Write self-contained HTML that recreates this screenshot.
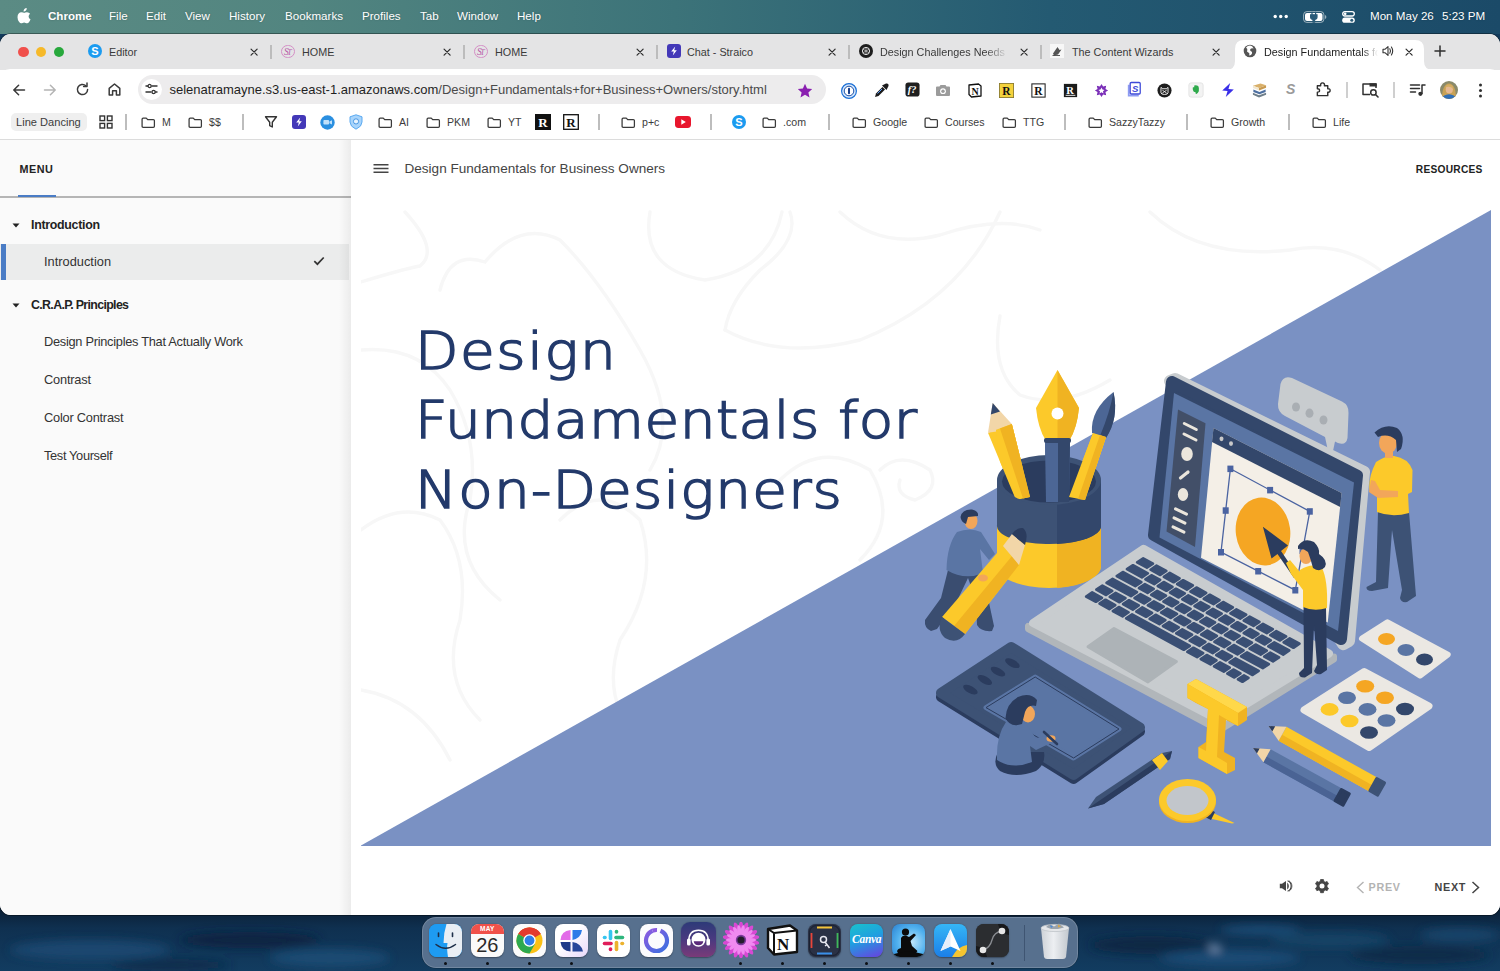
<!DOCTYPE html>
<html lang="en">
<head>
<meta charset="utf-8">
<title>Design Fundamentals for Business Owners</title>
<style>
*{box-sizing:border-box;margin:0;padding:0}
html,body{width:1500px;height:971px;overflow:hidden}
body{position:relative;font-family:"Liberation Sans",sans-serif;background:#0f3252;color:#222}
.abs{position:absolute}
/* desktop */
#desk{position:absolute;left:0;top:0;width:1500px;height:971px;background:#123a5c}
#menubar{position:absolute;left:0;top:0;width:1500px;height:34px;background:linear-gradient(90deg,#5b8b84 0%,#528580 20%,#3c7379 45%,#245a72 70%,#1b4a68 100%);color:#fff;font-size:11.6px}
#menubar span{position:absolute;top:8px;line-height:15px;white-space:nowrap;text-shadow:0 0 2px rgba(0,0,0,.25)}
/* window */
#win{position:absolute;left:0;top:34px;width:1500px;height:881px;background:#fff;border-radius:11px 11px 11px 11px;overflow:hidden;box-shadow:0 0 0 1px rgba(0,0,0,.35)}
#tabs{position:absolute;left:0;top:0;width:1500px;height:36px;background:#e4e4e5}
#toolbar{position:absolute;left:0;top:36.5px;width:1500px;height:38px;background:#fff}
#tbbg{position:absolute;left:0;top:35px;width:1500px;height:40px;background:#fff;border-radius:10px 10px 0 0}
#bm{position:absolute;left:0;top:72px;width:1500px;height:34px;background:#fff;border-bottom:1px solid #dcdcdc}
.tabt{position:absolute;top:10.5px;font-size:10.8px;color:#3a3a3a;white-space:nowrap;line-height:14px}
.tabx{position:absolute;top:13.7px;width:8.2px;height:8.2px;margin-left:1.2px}
.tsep{position:absolute;top:11px;width:1.5px;height:13.5px;background:#bcbcbc}
.bmt{position:absolute;top:9px;font-size:10.6px;color:#3c3c3c;white-space:nowrap;line-height:14px}
.bsep{position:absolute;top:8px;width:1.5px;height:16px;background:#bdbdbd}
.fav-st{width:13.5px;height:13.5px;font-family:"Liberation Serif",serif;font-size:9.5px;color:#b95aa8;line-height:12px;letter-spacing:-1.6px;border:1px solid #d48fc6;border-radius:50%;text-align:center;padding-right:1.5px;margin-left:1px;margin-top:.5px;font-style:italic}
.fav-st i{font-size:8px}
.dki{position:absolute;top:6.5px;width:33px;height:33px;border-radius:8px;overflow:hidden;box-shadow:0 .5px 1.5px rgba(0,0,0,.35)}
/* page */
#side{position:absolute;left:0;top:106px;width:351px;height:775px;background:#fafafa}
#main{position:absolute;left:351px;top:106px;width:1149px;height:775px;background:#fff}
.mi{position:absolute;left:44px;font-size:12.3px;color:#333;white-space:nowrap;line-height:16px}
.mh{position:absolute;left:31px;font-size:11.6px;font-weight:bold;color:#222;white-space:nowrap;line-height:16px}
#title{position:absolute;left:414px;color:#233a6b;font-family:"DejaVu Sans","Liberation Sans",sans-serif;font-weight:200;white-space:nowrap}
</style>
</head>
<body>
<div id="desk"><svg class="abs" style="left:0;top:905px" width="1500" height="66" viewBox="0 905 1500 66"><defs><filter id="wb" x="-10%" y="-50%" width="120%" height="200%"><feGaussianBlur stdDeviation="5"/></filter><linearGradient id="wg" x1="0" y1="0" x2="0" y2="1"><stop offset="0" stop-color="#0a1c30"/><stop offset=".35" stop-color="#0f3050"/><stop offset="1" stop-color="#123c60"/></linearGradient></defs><rect x="0" y="905" width="1500" height="66" fill="url(#wg)"/><g filter="url(#wb)" opacity=".9"><ellipse cx="90" cy="950" rx="80" ry="10" fill="#1a4a72"/><ellipse cx="250" cy="940" rx="70" ry="8" fill="#0a2440"/><ellipse cx="330" cy="958" rx="60" ry="9" fill="#1b4d76"/><ellipse cx="170" cy="965" rx="60" ry="6" fill="#0c2a48"/><ellipse cx="1150" cy="945" rx="60" ry="9" fill="#0b2542"/><ellipse cx="1230" cy="958" rx="70" ry="8" fill="#1b4d78"/><ellipse cx="1330" cy="940" rx="60" ry="8" fill="#184468"/><ellipse cx="1420" cy="955" rx="70" ry="9" fill="#0c2946"/><ellipse cx="1260" cy="930" rx="40" ry="5" fill="#1c4f7a"/><ellipse cx="1460" cy="935" rx="40" ry="6" fill="#1a4870"/><ellipse cx="1215" cy="948" rx="5" ry="4" fill="#8aa0c0"/></g></svg></div>
<div id="menubar">
<svg class="abs" style="left:17px;top:8px" width="14" height="16" viewBox="0 0 14 16"><path d="M9.700 0 Q9.900 1.500 8.900 2.600 Q7.900 3.700 6.600 3.600 Q6.400 2.200 7.400 1.100 Q8.400 .1 9.700 0 Z M11.600 8.400 Q11.600 10.400 13.500 11.300 Q13 12.800 12.100 14 Q11.200 15.300 10.200 15.300 Q9.300 15.300 8.600 14.900 Q7.900 14.600 7.100 14.600 Q6.300 14.600 5.600 14.900 Q4.900 15.300 4.200 15.300 Q3.100 15.300 2 13.800 Q.500 11.700 .500 9.200 Q.500 6.900 1.700 5.500 Q2.800 4.200 4.400 4.200 Q5.200 4.200 6.100 4.600 Q6.800 4.900 7.100 4.900 Q7.400 4.900 8.300 4.500 Q9.300 4.100 10.100 4.200 Q12 4.300 13.100 5.800 Q11.600 6.800 11.600 8.400 Z" fill="#fff"/></svg>
<svg class="abs" style="left:1273px;top:14px" width="16" height="5" viewBox="0 0 16 5"><circle cx="2.200" cy="2.500" r="1.700" fill="#fff"/><circle cx="7.700" cy="2.500" r="1.700" fill="#fff"/><circle cx="13.200" cy="2.500" r="1.700" fill="#fff"/></svg>
<svg class="abs" style="left:1303px;top:10.500px" width="24" height="12" viewBox="0 0 24 12"><rect x=".6" y=".6" width="20.300" height="10.800" rx="3.200" fill="none" stroke="rgba(255,255,255,.55)" stroke-width="1"/><rect x="2" y="2" width="17.500" height="8" rx="2" fill="#fff"/><path d="M22 4 Q23.400 4.600 23.400 6 Q23.400 7.400 22 8 Z" fill="rgba(255,255,255,.55)"/><path d="M9 .8 V3.600 M12.600 .8 V3.600 M7.600 3.800 H14 V6 Q14 8.200 11.600 8.400 V11.200 H10 V8.400 Q7.600 8.200 7.600 6 Z" fill="#2a5b78" stroke="#2a5b78" stroke-width="1.200"/></svg>
<svg class="abs" style="left:1342px;top:10.500px" width="13" height="12" viewBox="0 0 13 12"><rect x=".7" y=".7" width="11.600" height="4.300" rx="2.150" fill="none" stroke="#fff" stroke-width="1.300"/><circle cx="3.200" cy="2.850" r="1.300" fill="#fff"/><rect x=".2" y="6.600" width="12.600" height="5.200" rx="2.600" fill="#fff"/><circle cx="9.800" cy="9.200" r="1.500" fill="#2a5b78"/></svg>
<span style="left:48px;font-weight:bold">Chrome</span>
<span style="left:109px">File</span>
<span style="left:146px">Edit</span>
<span style="left:185px">View</span>
<span style="left:229px">History</span>
<span style="left:285px">Bookmarks</span>
<span style="left:362px">Profiles</span>
<span style="left:420px">Tab</span>
<span style="left:457px">Window</span>
<span style="left:517px">Help</span>
<span style="left:1370px">Mon May 26</span>
<span style="left:1442px">5:23 PM</span>
</div>
<div id="win">
 <div id="tabs">
  <svg width="0" height="0" style="position:absolute"><defs>
   <symbol id="x" viewBox="0 0 10 10"><path d="M1.3 1.3 L8.7 8.7 M8.7 1.3 L1.3 8.7" stroke="#2e2e2e" stroke-width="1.5" fill="none" stroke-linecap="round"/></symbol>
   <symbol id="fold" viewBox="0 0 16 14" preserveAspectRatio="none"><path d="M1.2 2.6 Q1.2 1.4 2.4 1.4 H5.8 L7.4 3.2 H13.6 Q14.8 3.2 14.8 4.4 V11.4 Q14.8 12.6 13.6 12.6 H2.4 Q1.2 12.6 1.2 11.4 Z" fill="none" stroke="#3a3a3a" stroke-width="1.4" stroke-linejoin="round"/></symbol>
  </defs></svg>
  <div class="abs" style="left:18.3px;top:12.7px;width:10.6px;height:10.6px;border-radius:50%;background:#f0504c"></div>
  <div class="abs" style="left:35.9px;top:12.7px;width:10.6px;height:10.6px;border-radius:50%;background:#f6b929"></div>
  <div class="abs" style="left:53.5px;top:12.7px;width:10.6px;height:10.6px;border-radius:50%;background:#27a83c"></div>
  <!-- tab1 -->
  <div class="abs" style="left:88px;top:10px;width:14px;height:14px;border-radius:50%;background:#1b9bf0;color:#fff;font-size:11px;font-weight:bold;text-align:center;line-height:14px">S</div>
  <div class="tabt" style="left:109px">Editor</div>
  <svg class="tabx" style="left:249px"><use href="#x"/></svg>
  <div class="tsep" style="left:270px"></div>
  <!-- tab2 -->
  <div class="abs fav-st" style="left:280px;top:10px">S<i>T</i></div>
  <div class="tabt" style="left:302px">HOME</div>
  <svg class="tabx" style="left:442px"><use href="#x"/></svg>
  <div class="tsep" style="left:463px"></div>
  <!-- tab3 -->
  <div class="abs fav-st" style="left:473px;top:10px">S<i>T</i></div>
  <div class="tabt" style="left:495px">HOME</div>
  <svg class="tabx" style="left:635px"><use href="#x"/></svg>
  <div class="tsep" style="left:656px"></div>
  <!-- tab4 -->
  <svg class="abs" style="left:667px;top:10px" width="14" height="14" viewBox="0 0 14 14"><rect width="14" height="14" rx="3" fill="#4338b8"/><path d="M8.2 2.5 L4.2 7.6 H6.8 L5.8 11.5 L9.8 6.2 H7.2 Z" fill="#fff"/></svg>
  <div class="tabt" style="left:687px">Chat - Straico</div>
  <svg class="tabx" style="left:827px"><use href="#x"/></svg>
  <div class="tsep" style="left:848px"></div>
  <!-- tab5 -->
  <svg class="abs" style="left:859px;top:10px" width="14" height="14" viewBox="0 0 14 14"><circle cx="7" cy="7" r="7" fill="#1d1d1d"/><circle cx="7" cy="7" r="3.6" fill="none" stroke="#e8e8e8" stroke-width="1"/><path d="M7 3.4 V10.6 M3.9 5.2 L10.1 8.8 M10.1 5.2 L3.9 8.8" stroke="#e8e8e8" stroke-width=".6"/></svg>
  <div class="tabt" style="left:880px;width:128px;overflow:hidden;-webkit-mask-image:linear-gradient(90deg,#000 82%,transparent 100%);mask-image:linear-gradient(90deg,#000 82%,transparent 100%)">Design Challenges Needs a</div>
  <svg class="tabx" style="left:1019px"><use href="#x"/></svg>
  <div class="tsep" style="left:1040px"></div>
  <!-- tab6 -->
  <svg class="abs" style="left:1050px;top:10px" width="14" height="14" viewBox="0 0 14 14"><rect width="14" height="14" fill="#f7f7f7"/><path d="M3 9.5 L7.5 3 L9.5 6 L11.5 5.5 L8 10.5 L4 11.5 Z" fill="#555"/><path d="M2.5 11.5 H10" stroke="#333" stroke-width=".8"/></svg>
  <div class="tabt" style="left:1072px">The Content Wizards</div>
  <svg class="tabx" style="left:1211px"><use href="#x"/></svg>
  <!-- active tab -->
  <svg class="abs" style="left:1226px;top:5px" width="210" height="31" viewBox="0 0 210 31"><path d="M0 31 Q9 31 9 22 V10 Q9 1 18 1 H189 Q198 1 198 10 V22 Q198 31 207 31 Z" fill="#fff"/></svg>
  <svg class="abs" style="left:1243px;top:10px" width="14" height="14" viewBox="0 0 14 14"><circle cx="7" cy="7" r="6.3" fill="#555"/><path d="M3 3.5 Q5 5 4.2 6.6 Q3.4 8 5.4 8.6 Q7 9.2 6.2 11.6 Q8.4 11.4 9 9.4 Q9.6 7.8 8 7.2 Q6.4 6.6 7.4 5 Q8.4 3.8 10.6 4.4 Q9.4 1.6 7 1.4 Q4.6 1.4 3 3.5Z" fill="#fff"/></svg>
  <div class="tabt" style="left:1264px;width:114px;color:#222;overflow:hidden;-webkit-mask-image:linear-gradient(90deg,#000 86%,transparent 100%);mask-image:linear-gradient(90deg,#000 86%,transparent 100%)">Design Fundamentals for</div>
  <svg class="abs" style="left:1382px;top:11px" width="13" height="12" viewBox="0 0 13 12"><path d="M1 4.2 H3.2 L6 1.6 V10.4 L3.2 7.8 H1 Z" fill="none" stroke="#333" stroke-width="1.1" stroke-linejoin="round"/><path d="M7.8 3.8 Q9.2 6 7.8 8.2 M9.4 2 Q12 6 9.4 10" fill="none" stroke="#333" stroke-width="1.1" stroke-linecap="round"/></svg>
  <svg class="tabx" style="left:1404px"><use href="#x"/></svg>
  <svg class="abs" style="left:1434px;top:11px" width="12" height="12" viewBox="0 0 12 12"><path d="M6 1 V11 M1 6 H11" stroke="#2e2e2e" stroke-width="1.5" stroke-linecap="round"/></svg>
 </div>
 <div id="tbbg"></div>
 <div id="toolbar">
  <!-- nav -->
  <svg class="abs" style="left:12px;top:12px" width="14" height="14" viewBox="0 0 14 14"><path d="M12.5 7 H2 M6.6 2.2 L1.8 7 L6.6 11.8" fill="none" stroke="#3a3a3a" stroke-width="1.5" stroke-linecap="round" stroke-linejoin="round"/></svg>
  <svg class="abs" style="left:43px;top:12px" width="14" height="14" viewBox="0 0 14 14"><path d="M1.5 7 H12 M7.4 2.2 L12.2 7 L7.4 11.8" fill="none" stroke="#b4b4b4" stroke-width="1.5" stroke-linecap="round" stroke-linejoin="round"/></svg>
  <svg class="abs" style="left:75px;top:11px" width="15" height="15" viewBox="0 0 15 15"><path d="M12.6 7.5 A5.1 5.1 0 1 1 10.9 3.7" fill="none" stroke="#3a3a3a" stroke-width="1.5" stroke-linecap="round"/><path d="M8.6 4.4 H12 V1" fill="none" stroke="#3a3a3a" stroke-width="1.5" stroke-linejoin="round" stroke-linecap="round"/></svg>
  <svg class="abs" style="left:107px;top:11px" width="15" height="15" viewBox="0 0 15 15"><path d="M2.2 6.4 L7.5 2 L12.8 6.4 V13 H9.4 V8.8 H5.6 V13 H2.2 Z" fill="none" stroke="#3a3a3a" stroke-width="1.5" stroke-linejoin="round"/></svg>
  <!-- omnibox -->
  <div class="abs" style="left:138px;top:4px;width:688px;height:29.5px;border-radius:15px;background:#edeced"></div>
  <div class="abs" style="left:140.5px;top:8.200px;width:21px;height:21px;border-radius:50%;background:#fff"></div>
  <svg class="abs" style="left:144.500px;top:12.700px" width="13" height="12" viewBox="0 0 13 12"><path d="M1 3 H3 M7 3 H12 M1 9 H6 M10.6 9 H12" stroke="#333" stroke-width="1.4" stroke-linecap="round"/><circle cx="4.6" cy="3" r="1.6" fill="none" stroke="#333" stroke-width="1.3"/><circle cx="8.6" cy="9" r="1.6" fill="none" stroke="#333" stroke-width="1.3"/></svg>
  <div class="abs" id="url" style="left:169.5px;top:11.5px;font-size:13px;line-height:16px;color:#1f1f1f;white-space:nowrap">selenatramayne.s3.us-east-1.amazonaws.com<span style="color:#4a4a4a">/Design+Fundamentals+for+Business+Owners/story.html</span></div>
  <svg class="abs" style="left:797px;top:12px" width="16" height="15" viewBox="0 0 16 15"><path d="M8 .8 L10.1 5.5 L15.2 6 L11.4 9.4 L12.5 14.4 L8 11.8 L3.5 14.4 L4.6 9.4 L.8 6 L5.9 5.5 Z" fill="#8a1fb0"/></svg>
  <!-- extensions -->
  <svg class="abs" style="left:841px;top:12px" width="16" height="16" viewBox="0 0 16 16"><circle cx="8" cy="8" r="7.4" fill="#d8e8fb" stroke="#1a6fd6" stroke-width="1.2"/><circle cx="8" cy="8" r="4.8" fill="#fff" stroke="#1a4fa8" stroke-width="1"/><rect x="7" y="4.8" width="2" height="6.4" rx="1" fill="#1a3f8a"/></svg>
  <svg class="abs" style="left:873px;top:11px" width="17" height="17" viewBox="0 0 17 17"><path d="M2 15 L3 11.5 L9.5 5 L12 7.5 L5.5 14 Z" fill="#1b1b1b"/><path d="M9 3.5 L13.5 8 L15.5 4 Q16 1 13 1.5 Z" fill="#1b1b1b"/><path d="M4.5 11.5 L9 7" stroke="#5aa0ff" stroke-width="1"/></svg>
  <svg class="abs" style="left:904.5px;top:11.5px" width="15" height="15" viewBox="0 0 16 16"><rect x=".5" y=".5" width="15" height="15" rx="3" fill="#1f1f1f"/><text x="3" y="12" font-family="Liberation Serif,serif" font-style="italic" font-weight="bold" font-size="11" fill="#fff">f?</text></svg>
  <svg class="abs" style="left:935px;top:13px" width="16" height="13" viewBox="0 0 16 13"><path d="M1 3.5 Q1 2.5 2 2.5 H4.5 L5.5 1 H10.5 L11.5 2.5 H14 Q15 2.5 15 3.5 V11 Q15 12 14 12 H2 Q1 12 1 11 Z" fill="#9b9b9b"/><circle cx="8" cy="7.2" r="2.9" fill="#fff"/><circle cx="8" cy="7.2" r="1.7" fill="#9b9b9b"/></svg>
  <svg class="abs" style="left:967px;top:11px" width="16" height="16" viewBox="0 0 16 16"><path d="M2 3 L11.5 2 L14 4 V14 L4.5 15 L2 12.5 Z" fill="#fff" stroke="#111" stroke-width="1.3" stroke-linejoin="round"/><text x="4.6" y="12.6" font-family="Liberation Serif,serif" font-weight="bold" font-size="10" fill="#111">N</text></svg>
  <svg class="abs" style="left:999px;top:12px" width="15" height="15" viewBox="0 0 17 17"><rect x=".5" y=".5" width="16" height="16" fill="#f4d23c" stroke="#8a7a2a" stroke-width="1"/><text x="3.6" y="13.2" font-family="Liberation Serif,serif" font-weight="bold" font-size="13" fill="#111">R</text></svg>
  <svg class="abs" style="left:1031px;top:12px" width="15" height="15" viewBox="0 0 17 17"><rect x="1" y="1" width="15" height="15" fill="#fff" stroke="#222" stroke-width="1.2"/><text x="3.8" y="13.2" font-family="Liberation Serif,serif" font-weight="bold" font-size="13" fill="#111">R</text></svg>
  <svg class="abs" style="left:1063px;top:12px" width="15" height="15" viewBox="0 0 17 17"><rect x="1" y="1" width="15" height="15" fill="#1b1b1b"/><text x="3.8" y="12.6" font-family="Liberation Serif,serif" font-weight="bold" font-size="12" fill="#fff">R</text><path d="M3 14 H14" stroke="#fff" stroke-width="1"/></svg>
  <svg class="abs" style="left:1094px;top:12px" width="15" height="15" viewBox="0 0 17 17"><path d="M8.5 1 L10.3 4 L13.8 3.2 L13 6.7 L16 8.5 L13 10.3 L13.8 13.8 L10.3 13 L8.5 16 L6.7 13 L3.2 13.8 L4 10.3 L1 8.5 L4 6.7 L3.2 3.2 L6.7 4 Z" fill="#7b2fb8"/><path d="M8.5 5.2 L9.6 7.4 L12 7.8 L10.2 9.4 L10.7 11.8 L8.5 10.6 L6.3 11.8 L6.8 9.4 L5 7.8 L7.4 7.4 Z" fill="#fff"/></svg>
  <svg class="abs" style="left:1125.75px;top:10.75px" width="15.5" height="16.5" viewBox="0 0 17 18"><path d="M2 4 H4 V15 H14 V17 H2 Z" fill="#8e9cf2"/><rect x="4.6" y="1.6" width="11" height="12.6" rx="1.2" fill="#fff" stroke="#3d49d8" stroke-width="1.4"/><text x="6.6" y="12" font-family="Liberation Sans,sans-serif" font-weight="bold" font-style="italic" font-size="10.5" fill="#3d49d8">S</text></svg>
  <svg class="abs" style="left:1157px;top:12px" width="15" height="15" viewBox="0 0 17 17"><circle cx="8.500" cy="8.500" r="8" fill="#1e1e1e"/><path d="M4.500 5 L6.500 6.500 H10.500 L12.500 5 V11 Q12.500 13 8.500 13 Q4.500 13 4.500 11 Z" fill="none" stroke="#fff" stroke-width="1"/><path d="M6 8 L11 11.500 M11 8 L6 11.500" stroke="#fff" stroke-width=".9"/></svg>
  <svg class="abs" style="left:1188px;top:11px" width="16" height="16" viewBox="0 0 18 18"><rect x="1" y="1" width="16" height="16" rx="2.500" fill="#f3f3f3" stroke="#e2e2e2"/><path d="M7 4 Q9 3.200 11.500 4.500 Q13 7 12.200 10.500 Q11 13 9.500 13.500 Q8 13.500 8.500 11.500 Q6 11.500 5.500 9 Q5.200 7 5.500 6 H7 Z" fill="#2faa4c"/></svg>
  <svg class="abs" style="left:1220px;top:11px" width="16" height="16" viewBox="0 0 18 18"><path d="M11.500 1 L2.500 9.500 L8.500 10 L6.500 17 L15.500 8.500 L9.500 8 Z" fill="#3a2fe8"/></svg>
  <svg class="abs" style="left:1250.5px;top:11.5px" width="17" height="16" viewBox="0 0 18 17"><path d="M2 4 L10 1.500 L16 3.500 L8.500 6.500 Z" fill="#d9b06a"/><path d="M2 4 V6.500 L8.500 9 V6.500 Z" fill="#f1e6cf"/><path d="M8.500 6.500 L16 3.500 V6 L8.500 9 Z" fill="#c89a50"/><path d="M2.500 8 L9 10.500 L15.500 8 V10.500 L9 13 L2.500 10.500 Z" fill="#4d6fa0"/><path d="M2 11.500 L8.500 14 L16 11.500 V13.500 L8.500 16.500 L2 13.500 Z" fill="#6f7f8a"/></svg>
  <div class="abs" style="left:1286px;top:10.500px;font-size:14px;font-style:italic;font-weight:bold;color:#9a9a9a;line-height:17px">S</div>
  <svg class="abs" style="left:1314.5px;top:10.5px" width="17" height="17" viewBox="0 0 18 18"><path d="M2.500 5 H6 Q5.600 2 8 2 Q10.400 2 10 5 H13.500 V8.200 Q16 7.800 16 10 Q16 12.200 13.500 11.800 V15.500 H2.500 V11.800 Q4.800 12 4.800 10 Q4.800 8 2.500 8.200 Z" fill="none" stroke="#303030" stroke-width="1.500" stroke-linejoin="round"/></svg>
  <div class="abs" style="left:1346px;top:11px;width:1.5px;height:16px;background:#cfcfcf"></div>
  <svg class="abs" style="left:1361px;top:11px" width="19" height="17" viewBox="0 0 19 17"><path d="M9 12.500 H2 V2 H15 V6" fill="none" stroke="#303030" stroke-width="1.500" stroke-linejoin="round"/><rect x="8.500" y="1.300" width="7.200" height="3.200" fill="#303030"/><circle cx="12.400" cy="10.400" r="2.700" fill="none" stroke="#303030" stroke-width="1.500"/><path d="M14.500 12.500 L17 15" stroke="#303030" stroke-width="1.600" stroke-linecap="round"/></svg>
  <div class="abs" style="left:1393px;top:11px;width:1.5px;height:16px;background:#cfcfcf"></div>
  <svg class="abs" style="left:1409px;top:11px" width="17" height="16" viewBox="0 0 17 16"><path d="M1.500 3 H10.500 M1.500 6.500 H10.500 M1.500 10 H6.500" stroke="#303030" stroke-width="1.500" stroke-linecap="round"/><path d="M13 3 V11.500 M13 3 H16" stroke="#303030" stroke-width="1.500" stroke-linecap="round"/><circle cx="11.400" cy="11.800" r="2.100" fill="#303030"/></svg>
  <svg class="abs" style="left:1440px;top:10px" width="18" height="18" viewBox="0 0 18 18"><defs><clipPath id="avc"><circle cx="9" cy="9" r="9"/></clipPath></defs><g clip-path="url(#avc)"><rect width="18" height="18" fill="#8a8a6a"/><path d="M2 18 Q2 3 9 2.500 Q16 3 16 18 Z" fill="#c9a256"/><ellipse cx="9.300" cy="8.300" rx="3.600" ry="4.300" fill="#e6b892"/><path d="M5 7 Q6 3.500 9.500 3.600 Q13 4 13.200 8 Q11 5.500 8 5.800 Q6 6 5 7 Z" fill="#d4ad62"/><path d="M2 18 Q3 13.500 9 13.200 Q15 13.500 16 18 Z" fill="#2f6fb8"/></g></svg>
  <svg class="abs" style="left:1478px;top:12px" width="5" height="15" viewBox="0 0 5 15"><circle cx="2.500" cy="2" r="1.500" fill="#303030"/><circle cx="2.500" cy="7.500" r="1.500" fill="#303030"/><circle cx="2.500" cy="13" r="1.500" fill="#303030"/></svg>
 </div>
 <div id="bm">
  <div class="abs" style="left:11px;top:7px;width:76px;height:18px;border-radius:5px;background:#efefef"></div>
  <div class="bmt" style="left:16px;font-size:11.1px">Line Dancing</div>
  <svg class="abs" style="left:99px;top:9px" width="14" height="14" viewBox="0 0 14 14"><g fill="none" stroke="#333" stroke-width="1.4"><rect x="1" y="1" width="4.6" height="4.6"/><rect x="8.4" y="1" width="4.6" height="4.6"/><rect x="1" y="8.4" width="4.6" height="4.6"/><rect x="8.4" y="8.4" width="4.6" height="4.6"/></g></svg>
  <div class="bsep" style="left:125px"></div>
  <svg class="abs" style="left:141px;top:10.5px" width="14.5" height="11.5" viewBox="0 0 16 14" preserveAspectRatio="none"><use href="#fold"/></svg>
  <div class="bmt" style="left:162px">M</div>
  <svg class="abs" style="left:188px;top:10.5px" width="14.5" height="11.5" viewBox="0 0 16 14" preserveAspectRatio="none"><use href="#fold"/></svg>
  <div class="bmt" style="left:209px">$$</div>
  <div class="bsep" style="left:242px"></div>
  <svg class="abs" style="left:264px;top:9px" width="14" height="14" viewBox="0 0 14 14"><path d="M1.500 1.800 H12.500 L8.300 7.200 V12 L5.700 10.600 V7.200 Z" fill="none" stroke="#333" stroke-width="1.400" stroke-linejoin="round"/></svg>
  <svg class="abs" style="left:292px;top:9px" width="14" height="14" viewBox="0 0 14 14"><rect width="14" height="14" rx="3" fill="#4338b8"/><path d="M8.200 2.500 L4.200 7.600 H6.800 L5.800 11.500 L9.800 6.200 H7.200 Z" fill="#fff"/></svg>
  <svg class="abs" style="left:320px;top:9px" width="15" height="15" viewBox="0 0 15 15"><circle cx="7.500" cy="7.500" r="7.200" fill="#2a8fe0"/><rect x="3.400" y="5" width="5.600" height="4.600" rx=".8" fill="#bfe0fa"/><path d="M9.400 6.600 L12 5.200 V9.600 L9.400 8.200 Z" fill="#bfe0fa"/></svg>
  <svg class="abs" style="left:349px;top:8px" width="14" height="16" viewBox="0 0 14 16"><path d="M7 .8 L13 2.800 V8 Q13 12.500 7 15.200 Q1 12.500 1 8 V2.800 Z" fill="#a8d4fb" stroke="#5aa9f0" stroke-width="1"/><circle cx="7" cy="7.400" r="2.600" fill="#e8f4ff" stroke="#3a8fe0" stroke-width=".9"/></svg>
  <svg class="abs" style="left:378px;top:10.5px" width="14.5" height="11.5" viewBox="0 0 16 14" preserveAspectRatio="none"><use href="#fold"/></svg>
  <div class="bmt" style="left:399px">AI</div>
  <svg class="abs" style="left:426px;top:10.5px" width="14.5" height="11.5" viewBox="0 0 16 14" preserveAspectRatio="none"><use href="#fold"/></svg>
  <div class="bmt" style="left:447px">PKM</div>
  <svg class="abs" style="left:487px;top:10.5px" width="14.5" height="11.5" viewBox="0 0 16 14" preserveAspectRatio="none"><use href="#fold"/></svg>
  <div class="bmt" style="left:508px">YT</div>
  <svg class="abs" style="left:535px;top:8px" width="16" height="16" viewBox="0 0 16 16"><rect width="16" height="16" fill="#111"/><text x="3.200" y="12.800" font-family="Liberation Serif,serif" font-weight="bold" font-size="13" fill="#fff">R</text></svg>
  <svg class="abs" style="left:563px;top:8px" width="16" height="16" viewBox="0 0 16 16"><rect x=".7" y=".7" width="14.600" height="14.600" fill="#fff" stroke="#111" stroke-width="1.300"/><text x="3.200" y="12.800" font-family="Liberation Serif,serif" font-weight="bold" font-size="13" fill="#111">R</text></svg>
  <div class="bsep" style="left:598px"></div>
  <svg class="abs" style="left:621px;top:10.5px" width="14.5" height="11.5" viewBox="0 0 16 14" preserveAspectRatio="none"><use href="#fold"/></svg>
  <div class="bmt" style="left:642px">p+c</div>
  <svg class="abs" style="left:675px;top:10px" width="16" height="12" viewBox="0 0 16 12"><rect width="16" height="12" rx="3.400" fill="#e8162d"/><path d="M6.300 3.300 L10.800 6 L6.300 8.700 Z" fill="#fff"/></svg>
  <div class="bsep" style="left:710px"></div>
  <div class="abs" style="left:732px;top:9px;width:14px;height:14px;border-radius:50%;background:#1b9bf0;color:#fff;font-size:11px;font-weight:bold;text-align:center;line-height:14px">S</div>
  <svg class="abs" style="left:762px;top:10.5px" width="14.5" height="11.5" viewBox="0 0 16 14" preserveAspectRatio="none"><use href="#fold"/></svg>
  <div class="bmt" style="left:783px">.com</div>
  <div class="bsep" style="left:828px"></div>
  <svg class="abs" style="left:852px;top:10.5px" width="14.5" height="11.5" viewBox="0 0 16 14" preserveAspectRatio="none"><use href="#fold"/></svg>
  <div class="bmt" style="left:873px">Google</div>
  <svg class="abs" style="left:924px;top:10.5px" width="14.5" height="11.5" viewBox="0 0 16 14" preserveAspectRatio="none"><use href="#fold"/></svg>
  <div class="bmt" style="left:945px">Courses</div>
  <svg class="abs" style="left:1002px;top:10.5px" width="14.5" height="11.5" viewBox="0 0 16 14" preserveAspectRatio="none"><use href="#fold"/></svg>
  <div class="bmt" style="left:1023px">TTG</div>
  <div class="bsep" style="left:1064px"></div>
  <svg class="abs" style="left:1088px;top:10.5px" width="14.5" height="11.5" viewBox="0 0 16 14" preserveAspectRatio="none"><use href="#fold"/></svg>
  <div class="bmt" style="left:1109px">SazzyTazzy</div>
  <div class="bsep" style="left:1186px"></div>
  <svg class="abs" style="left:1210px;top:10.5px" width="14.5" height="11.5" viewBox="0 0 16 14" preserveAspectRatio="none"><use href="#fold"/></svg>
  <div class="bmt" style="left:1231px">Growth</div>
  <div class="bsep" style="left:1288px"></div>
  <svg class="abs" style="left:1312px;top:10.5px" width="14.5" height="11.5" viewBox="0 0 16 14" preserveAspectRatio="none"><use href="#fold"/></svg>
  <div class="bmt" style="left:1333px">Life</div>
  </div>
 <div id="side">
  <div class="abs" id="menu" style="left:19.5px;top:23px;font-size:10.8px;font-weight:bold;letter-spacing:.5px;color:#222">MENU</div>
  <div class="abs" style="left:0;top:56px;width:351px;height:1.5px;background:#b5b5b5"></div>
  <div class="abs" style="left:18px;top:55px;width:38px;height:2px;background:#4a7cc5"></div>
  <div class="mh" style="top:77px;font-size:12.4px;letter-spacing:-0.297px">Introduction</div>
  <div class="abs" style="left:0;top:104px;width:349px;height:36px;background:#ebecec"></div>
  <div class="abs" style="left:.7px;top:104px;width:5.3px;height:36px;background:#4a7cc5"></div>
  <div class="mi" style="top:114px;font-size:12.8px;letter-spacing:0.011px">Introduction</div>
  <div class="mh" style="top:157px;font-size:12.4px;letter-spacing:-0.664px">C.R.A.P. Principles</div>
  <div class="mi" style="top:194px;font-size:12.8px;letter-spacing:-0.275px">Design Principles That Actually Work</div>
  <div class="mi" style="top:232px;font-size:12.8px;letter-spacing:-0.196px">Contrast</div>
  <div class="mi" style="top:270px;font-size:12.8px;letter-spacing:-0.231px">Color Contrast</div>
  <div class="mi" style="top:308px;font-size:12.8px;letter-spacing:-0.34px">Test Yourself</div>
<svg class="abs" style="left:12px;top:83px" width="8" height="5" viewBox="0 0 8 5"><path d="M.5 .5 H7.500 L4 4.500 Z" fill="#222"/></svg>
  <svg class="abs" style="left:12px;top:163px" width="8" height="5" viewBox="0 0 8 5"><path d="M.5 .5 H7.500 L4 4.500 Z" fill="#222"/></svg>
  <svg class="abs" style="left:313px;top:116px" width="12" height="10" viewBox="0 0 12 10"><path d="M1.300 5.200 L4.400 8.200 L10.700 1.500" fill="none" stroke="#333" stroke-width="1.700"/></svg>
  <div class="abs" style="left:339px;top:0;width:12px;height:775px;background:linear-gradient(90deg,rgba(0,0,0,0),rgba(0,0,0,.06))"></div>
 </div>
 <div id="main">
  <div class="abs" id="hdr" style="left:53.5px;top:20.5px;font-size:13.55px;color:#444;white-space:nowrap">Design Fundamentals for Business Owners</div>
  <div class="abs" id="res" style="left:1064.8px;top:24px;font-size:10.2px;font-weight:bold;letter-spacing:.25px;color:#222">RESOURCES</div>
  <!--ILLU--><svg class="abs" style="left:10px;top:70px" width="1130" height="636" viewBox="361 210 1130 636">
<g fill="none" stroke="#f7f7f7" stroke-width="3.400" stroke-linecap="round"><path d="M650 212 Q640 270 705 280 Q770 270 782 212"/><path d="M725 330 Q730 300 760 270 Q800 240 790 212"/><path d="M725 330 Q780 360 860 340 Q960 300 1000 212"/><path d="M361 282 Q400 270 420 266 Q440 250 405 212"/><path d="M440 290 Q450 250 485 262 Q520 220 560 240 Q600 280 640 350 Q680 420 650 470"/><path d="M361 350 Q420 345 450 390 Q480 440 470 500 Q450 560 500 600"/><path d="M1000 316 Q990 370 1020 395 Q1060 410 1110 380"/><path d="M361 530 Q400 500 440 520 Q470 560 460 620 Q440 680 480 720"/><path d="M560 520 Q600 480 640 520 Q660 580 620 640 Q600 700 640 740"/><path d="M840 212 Q880 250 940 235 Q1000 215 1040 230"/><path d="M361 690 Q420 700 450 760"/><path d="M780 480 Q820 440 870 470 Q900 520 860 560"/><path d="M880 470 Q900 450 930 470 Q940 490 915 500 Q895 495 900 480"/><path d="M1150 212 Q1200 260 1290 250 Q1340 240 1380 270"/></g>
<polygon points="360.200,846 1491,210 1491,846" fill="#7a91c3"/>
<path d="M1292 378 Q1283 375 1280.500 384 L1278 404 Q1277.500 412 1285 416 L1325 437 L1328 451 Q1330 455 1333 451 L1335 441.500 L1338 443 Q1346 446 1347.500 438 L1348.500 413 Q1349 405 1342 401.500 Z" fill="#c8cccf"/>
<ellipse cx="1296.0" cy="407.0" rx="4" ry="4.6" fill="#a9aeb3"/>
<ellipse cx="1309.5" cy="413.2" rx="4" ry="4.6" fill="#a9aeb3"/>
<ellipse cx="1323.5" cy="420.0" rx="4" ry="4.6" fill="#a9aeb3"/>
<polygon points="988.0,432.8 1011.8,424.0 1030.0,497.0 1016.0,500.0" fill="#fcc92a" />
<polygon points="1000.0,428.5 1011.8,424.0 1030.0,497.0 1023.0,498.5" fill="#f0b322" />
<polygon points="992.7,403.0 988.0,432.8 1000.0,431.0 1011.8,424.0" fill="#f2d6a8" />
<polygon points="992.7,403.0 990.8,414.5 1000.0,411.5" fill="#33476b" />
<polygon points="1045.0,438.0 1070.0,438.0 1069.0,502.0 1046.0,502.0" fill="#4c6695" />
<polygon points="1058.0,438.0 1070.0,438.0 1069.0,502.0 1058.0,502.0" fill="#33476b" />
<path d="M1057.500 370 L1079 408 Q1077 428 1069.500 440 H1045.500 Q1038 428 1036 408 Z" fill="#fcc92a"/>
<path d="M1057.500 370 L1079 408 Q1077 428 1069.500 440 H1057.500 Z" fill="#f0b322"/>
<circle cx="1057.500" cy="413.500" r="6" fill="#fff"/>
<rect x="1044" y="438" width="27" height="5" rx="2" fill="#33476b"/>
<polygon points="1093.0,433.0 1106.0,437.0 1085.0,500.0 1069.0,497.0" fill="#fcc92a" />
<polygon points="1100.0,435.0 1106.0,437.0 1085.0,500.0 1078.0,499.0" fill="#f0b322" />
<path d="M1113.500 392 Q1119 418 1106 438 L1092 433 Q1090 410 1113.500 392 Z" fill="#4c6695"/>
<path d="M1113.500 392 Q1119 418 1106 438 L1100 436 Q1110 412 1113.500 392 Z" fill="#33476b"/>
<path d="M997 480 V566 A52 22 0 0 0 1101 566 V480 Z" fill="#fcc92a"/>
<path d="M1057 480 V588 A52 22 0 0 0 1101 566 V480 Z" fill="#f0b322"/>
<path d="M997 480 V525 A52 18 0 0 0 1101 527 V480 Z" fill="#3d5275"/>
<path d="M1057 480 V544 A52 18 0 0 0 1101 527 V480 Z" fill="#33476b"/>
<ellipse cx="1049" cy="480" rx="52" ry="25" fill="#3d5275"/>
<ellipse cx="1049" cy="481.500" rx="47" ry="21" fill="#2b3c5e"/>
<clipPath id="cupin"><path d="M990 380 H1110 V481.500 A47 21 0 0 1 1002 481.500 Z"/></clipPath>
<g clip-path="url(#cupin)">
<polygon points="988.0,432.8 1011.8,424.0 1030.0,497.0 1016.0,500.0" fill="#fcc92a" />
<polygon points="1000.0,428.5 1011.8,424.0 1030.0,497.0 1023.0,498.5" fill="#f0b322" />
<polygon points="1045.0,443.0 1070.0,443.0 1069.0,502.0 1046.0,502.0" fill="#4c6695" />
<polygon points="1058.0,443.0 1070.0,443.0 1069.0,502.0 1058.0,502.0" fill="#33476b" />
<polygon points="1093.0,433.0 1106.0,437.0 1085.0,500.0 1069.0,497.0" fill="#fcc92a" />
<polygon points="1100.0,435.0 1106.0,437.0 1085.0,500.0 1078.0,499.0" fill="#f0b322" />
</g>
<path d="M1028.0 626.0 L1028.0 629.0 L1219.5 730.5 L1334.0 659.5 L1334.0 656.5 L1219.5 727.5 Z" fill="#b1b6ba" stroke="#b1b6ba" stroke-width="6" stroke-linejoin="round"/>
<polygon points="1033.0,623.0 1143.5,548.7 1329.0,653.5 1219.5,720.5" fill="#c8cccf" stroke="#c8cccf" stroke-width="8" stroke-linejoin="round"/>
<polygon points="1088,646.7 1114,628.6 1176.4,661.5 1148,681.9" fill="#adb3b7" stroke="#adb3b7" stroke-width="3" stroke-linejoin="round"/>
<polygon points="1143.2,558.4 1153.0,563.7 1146.9,567.7 1137.1,562.4" fill="#3a4f74" stroke="#3a4f74" stroke-width="2.600" stroke-linejoin="round"/>
<polygon points="1156.5,565.6 1166.3,571.0 1160.3,575.0 1150.5,569.7" fill="#3a4f74" stroke="#3a4f74" stroke-width="2.600" stroke-linejoin="round"/>
<polygon points="1169.8,572.9 1179.6,578.3 1173.6,582.3 1163.8,576.9" fill="#3a4f74" stroke="#3a4f74" stroke-width="2.600" stroke-linejoin="round"/>
<polygon points="1183.1,580.2 1192.9,585.5 1186.9,589.6 1177.1,584.2" fill="#3a4f74" stroke="#3a4f74" stroke-width="2.600" stroke-linejoin="round"/>
<polygon points="1196.4,587.5 1206.2,592.8 1200.2,596.8 1190.4,591.5" fill="#3a4f74" stroke="#3a4f74" stroke-width="2.600" stroke-linejoin="round"/>
<polygon points="1209.8,594.7 1219.6,600.1 1213.5,604.1 1203.7,598.8" fill="#3a4f74" stroke="#3a4f74" stroke-width="2.600" stroke-linejoin="round"/>
<polygon points="1223.1,602.0 1232.9,607.4 1226.8,611.4 1217.0,606.0" fill="#3a4f74" stroke="#3a4f74" stroke-width="2.600" stroke-linejoin="round"/>
<polygon points="1236.4,609.3 1246.2,614.6 1240.2,618.7 1230.4,613.3" fill="#3a4f74" stroke="#3a4f74" stroke-width="2.600" stroke-linejoin="round"/>
<polygon points="1249.7,616.6 1259.5,621.9 1253.5,625.9 1243.7,620.6" fill="#3a4f74" stroke="#3a4f74" stroke-width="2.600" stroke-linejoin="round"/>
<polygon points="1263.0,623.8 1272.8,629.2 1266.8,633.2 1257.0,627.9" fill="#3a4f74" stroke="#3a4f74" stroke-width="2.600" stroke-linejoin="round"/>
<polygon points="1276.3,631.1 1286.1,636.5 1280.1,640.5 1270.3,635.1" fill="#3a4f74" stroke="#3a4f74" stroke-width="2.600" stroke-linejoin="round"/>
<polygon points="1289.7,638.4 1299.5,643.7 1293.4,647.8 1283.6,642.4" fill="#3a4f74" stroke="#3a4f74" stroke-width="2.600" stroke-linejoin="round"/>
<polygon points="1133.0,565.2 1147.9,573.3 1141.9,577.4 1126.9,569.2" fill="#3a4f74" stroke="#3a4f74" stroke-width="2.600" stroke-linejoin="round"/>
<polygon points="1151.4,575.2 1160.2,580.0 1154.2,584.1 1145.4,579.3" fill="#3a4f74" stroke="#3a4f74" stroke-width="2.600" stroke-linejoin="round"/>
<polygon points="1163.7,582.0 1172.5,586.8 1166.4,590.8 1157.7,586.0" fill="#3a4f74" stroke="#3a4f74" stroke-width="2.600" stroke-linejoin="round"/>
<polygon points="1176.0,588.7 1184.8,593.5 1178.7,597.5 1170.0,592.7" fill="#3a4f74" stroke="#3a4f74" stroke-width="2.600" stroke-linejoin="round"/>
<polygon points="1188.3,595.4 1197.1,600.2 1191.0,604.2 1182.3,599.4" fill="#3a4f74" stroke="#3a4f74" stroke-width="2.600" stroke-linejoin="round"/>
<polygon points="1200.6,602.1 1209.4,606.9 1203.3,610.9 1194.5,606.1" fill="#3a4f74" stroke="#3a4f74" stroke-width="2.600" stroke-linejoin="round"/>
<polygon points="1212.9,608.8 1221.7,613.6 1215.6,617.6 1206.8,612.9" fill="#3a4f74" stroke="#3a4f74" stroke-width="2.600" stroke-linejoin="round"/>
<polygon points="1225.2,615.5 1233.9,620.3 1227.9,624.4 1219.1,619.6" fill="#3a4f74" stroke="#3a4f74" stroke-width="2.600" stroke-linejoin="round"/>
<polygon points="1237.5,622.2 1246.2,627.0 1240.2,631.1 1231.4,626.3" fill="#3a4f74" stroke="#3a4f74" stroke-width="2.600" stroke-linejoin="round"/>
<polygon points="1249.8,629.0 1258.5,633.8 1252.5,637.8 1243.7,633.0" fill="#3a4f74" stroke="#3a4f74" stroke-width="2.600" stroke-linejoin="round"/>
<polygon points="1262.0,635.7 1270.8,640.5 1264.8,644.5 1256.0,639.7" fill="#3a4f74" stroke="#3a4f74" stroke-width="2.600" stroke-linejoin="round"/>
<polygon points="1274.3,642.4 1289.3,650.5 1283.2,654.6 1268.3,646.4" fill="#3a4f74" stroke="#3a4f74" stroke-width="2.600" stroke-linejoin="round"/>
<polygon points="1122.8,572.0 1141.4,582.2 1135.3,586.2 1116.7,576.0" fill="#3a4f74" stroke="#3a4f74" stroke-width="2.600" stroke-linejoin="round"/>
<polygon points="1144.9,584.1 1153.7,588.9 1147.6,592.9 1138.9,588.1" fill="#3a4f74" stroke="#3a4f74" stroke-width="2.600" stroke-linejoin="round"/>
<polygon points="1157.2,590.8 1166.0,595.6 1159.9,599.6 1151.2,594.8" fill="#3a4f74" stroke="#3a4f74" stroke-width="2.600" stroke-linejoin="round"/>
<polygon points="1169.5,597.5 1178.3,602.3 1172.2,606.3 1163.4,601.5" fill="#3a4f74" stroke="#3a4f74" stroke-width="2.600" stroke-linejoin="round"/>
<polygon points="1181.8,604.2 1190.6,609.0 1184.5,613.0 1175.7,608.3" fill="#3a4f74" stroke="#3a4f74" stroke-width="2.600" stroke-linejoin="round"/>
<polygon points="1194.1,610.9 1202.8,615.7 1196.8,619.8 1188.0,615.0" fill="#3a4f74" stroke="#3a4f74" stroke-width="2.600" stroke-linejoin="round"/>
<polygon points="1206.4,617.6 1215.1,622.4 1209.1,626.5 1200.3,621.7" fill="#3a4f74" stroke="#3a4f74" stroke-width="2.600" stroke-linejoin="round"/>
<polygon points="1218.7,624.4 1227.4,629.2 1221.4,633.2 1212.6,628.4" fill="#3a4f74" stroke="#3a4f74" stroke-width="2.600" stroke-linejoin="round"/>
<polygon points="1230.9,631.1 1239.7,635.9 1233.7,639.9 1224.9,635.1" fill="#3a4f74" stroke="#3a4f74" stroke-width="2.600" stroke-linejoin="round"/>
<polygon points="1243.2,637.8 1252.0,642.6 1246.0,646.6 1237.2,641.8" fill="#3a4f74" stroke="#3a4f74" stroke-width="2.600" stroke-linejoin="round"/>
<polygon points="1255.5,644.5 1266.8,650.6 1260.7,654.7 1249.5,648.5" fill="#3a4f74" stroke="#3a4f74" stroke-width="2.600" stroke-linejoin="round"/>
<polygon points="1270.3,652.6 1279.1,657.4 1273.0,661.4 1264.2,656.6" fill="#3a4f74" stroke="#3a4f74" stroke-width="2.600" stroke-linejoin="round"/>
<polygon points="1112.6,578.8 1137.0,592.2 1131.0,596.2 1106.5,582.8" fill="#3a4f74" stroke="#3a4f74" stroke-width="2.600" stroke-linejoin="round"/>
<polygon points="1140.5,594.1 1150.3,599.4 1144.3,603.5 1134.5,598.1" fill="#3a4f74" stroke="#3a4f74" stroke-width="2.600" stroke-linejoin="round"/>
<polygon points="1153.9,601.4 1163.7,606.7 1157.6,610.7 1147.8,605.4" fill="#3a4f74" stroke="#3a4f74" stroke-width="2.600" stroke-linejoin="round"/>
<polygon points="1167.2,608.6 1177.0,614.0 1170.9,618.0 1161.1,612.7" fill="#3a4f74" stroke="#3a4f74" stroke-width="2.600" stroke-linejoin="round"/>
<polygon points="1180.5,615.9 1190.3,621.3 1184.3,625.3 1174.5,619.9" fill="#3a4f74" stroke="#3a4f74" stroke-width="2.600" stroke-linejoin="round"/>
<polygon points="1193.8,623.2 1203.6,628.5 1197.6,632.6 1187.8,627.2" fill="#3a4f74" stroke="#3a4f74" stroke-width="2.600" stroke-linejoin="round"/>
<polygon points="1207.1,630.5 1216.9,635.8 1210.9,639.8 1201.1,634.5" fill="#3a4f74" stroke="#3a4f74" stroke-width="2.600" stroke-linejoin="round"/>
<polygon points="1220.4,637.7 1230.2,643.1 1224.2,647.1 1214.4,641.8" fill="#3a4f74" stroke="#3a4f74" stroke-width="2.600" stroke-linejoin="round"/>
<polygon points="1233.8,645.0 1243.6,650.4 1237.5,654.4 1227.7,649.0" fill="#3a4f74" stroke="#3a4f74" stroke-width="2.600" stroke-linejoin="round"/>
<polygon points="1247.1,652.3 1268.9,664.2 1262.8,668.2 1241.0,656.3" fill="#3a4f74" stroke="#3a4f74" stroke-width="2.600" stroke-linejoin="round"/>
<polygon points="1102.4,585.6 1112.2,591.0 1106.1,595.0 1096.3,589.7" fill="#3a4f74" stroke="#3a4f74" stroke-width="2.600" stroke-linejoin="round"/>
<polygon points="1115.7,592.9 1125.5,598.2 1119.5,602.3 1109.7,596.9" fill="#3a4f74" stroke="#3a4f74" stroke-width="2.600" stroke-linejoin="round"/>
<polygon points="1129.0,600.2 1138.8,605.5 1132.8,609.6 1123.0,604.2" fill="#3a4f74" stroke="#3a4f74" stroke-width="2.600" stroke-linejoin="round"/>
<polygon points="1142.3,607.4 1152.1,612.8 1146.1,616.8 1136.3,611.5" fill="#3a4f74" stroke="#3a4f74" stroke-width="2.600" stroke-linejoin="round"/>
<polygon points="1155.6,614.7 1165.4,620.1 1159.4,624.1 1149.6,618.8" fill="#3a4f74" stroke="#3a4f74" stroke-width="2.600" stroke-linejoin="round"/>
<polygon points="1169.0,622.0 1178.8,627.3 1172.7,631.4 1162.9,626.0" fill="#3a4f74" stroke="#3a4f74" stroke-width="2.600" stroke-linejoin="round"/>
<polygon points="1182.3,629.3 1192.1,634.6 1186.0,638.7 1176.2,633.3" fill="#3a4f74" stroke="#3a4f74" stroke-width="2.600" stroke-linejoin="round"/>
<polygon points="1195.6,636.5 1205.4,641.9 1199.4,645.9 1189.6,640.6" fill="#3a4f74" stroke="#3a4f74" stroke-width="2.600" stroke-linejoin="round"/>
<polygon points="1208.9,643.8 1218.7,649.2 1212.7,653.2 1202.9,647.9" fill="#3a4f74" stroke="#3a4f74" stroke-width="2.600" stroke-linejoin="round"/>
<polygon points="1222.2,651.1 1232.0,656.4 1226.0,660.5 1216.2,655.1" fill="#3a4f74" stroke="#3a4f74" stroke-width="2.600" stroke-linejoin="round"/>
<polygon points="1235.5,658.4 1258.7,671.0 1252.6,675.0 1229.5,662.4" fill="#3a4f74" stroke="#3a4f74" stroke-width="2.600" stroke-linejoin="round"/>
<polygon points="1092.2,592.4 1102.0,597.8 1095.9,601.8 1086.1,596.5" fill="#3a4f74" stroke="#3a4f74" stroke-width="2.600" stroke-linejoin="round"/>
<polygon points="1105.5,599.7 1115.3,605.1 1109.3,609.1 1099.5,603.7" fill="#3a4f74" stroke="#3a4f74" stroke-width="2.600" stroke-linejoin="round"/>
<polygon points="1118.8,607.0 1128.6,612.3 1122.6,616.4 1112.8,611.0" fill="#3a4f74" stroke="#3a4f74" stroke-width="2.600" stroke-linejoin="round"/>
<polygon points="1132.1,614.3 1189.9,645.8 1183.8,649.8 1126.1,618.3" fill="#3a4f74" stroke="#3a4f74" stroke-width="2.600" stroke-linejoin="round"/>
<polygon points="1193.4,647.7 1203.2,653.1 1197.1,657.1 1187.3,651.8" fill="#3a4f74" stroke="#3a4f74" stroke-width="2.600" stroke-linejoin="round"/>
<polygon points="1206.7,655.0 1216.5,660.4 1210.5,664.4 1200.7,659.0" fill="#3a4f74" stroke="#3a4f74" stroke-width="2.600" stroke-linejoin="round"/>
<polygon points="1220.0,662.3 1229.8,667.6 1223.8,671.7 1214.0,666.3" fill="#3a4f74" stroke="#3a4f74" stroke-width="2.600" stroke-linejoin="round"/>
<polygon points="1233.3,669.5 1240.5,673.4 1234.4,677.5 1227.3,673.6" fill="#3a4f74" stroke="#3a4f74" stroke-width="2.600" stroke-linejoin="round"/>
<polygon points="1244.0,675.4 1248.5,677.8 1242.4,681.8 1237.9,679.4" fill="#3a4f74" stroke="#3a4f74" stroke-width="2.600" stroke-linejoin="round"/>
<polygon points="1175,379 1364,472 1349,641 1343.200,644.200 1170,381" fill="#c8cccf" stroke="#c8cccf" stroke-width="12" stroke-linejoin="round"/>
<polygon points="1172,382 1357,475.500 1341,639 1154,535" fill="#33476b" stroke="#33476b" stroke-width="12" stroke-linejoin="round"/>
<polygon points="1174.0,393.0 1354.0,482.5 1338.0,631.0 1159.5,537.5" fill="#5a75a4" />
<polygon points="1178.0,409.5 1205.5,423.3 1195.0,547.0 1166.5,531.5" fill="#424f68" />
<path d="M1184.3 423.5 L1196.3 429.5" stroke="#ebe6dc" stroke-width="3" stroke-linecap="round"/>
<path d="M1184.0 434.0 L1196.0 440.0" stroke="#ebe6dc" stroke-width="3" stroke-linecap="round"/>
<ellipse cx="1187" cy="454" rx="5.800" ry="7" fill="#ebe6dc"/>
<path d="M1180.500 478 L1188 472" stroke="#ebe6dc" stroke-width="3.200" stroke-linecap="round"/>
<ellipse cx="1183" cy="494.500" rx="5.200" ry="6.500" fill="#ebe6dc"/>
<path d="M1175.5 508.8 L1186.5 514.2" stroke="#ebe6dc" stroke-width="3" stroke-linecap="round"/>
<path d="M1174.0 517.8 L1185.0 523.2" stroke="#ebe6dc" stroke-width="3" stroke-linecap="round"/>
<path d="M1173.0 526.8 L1184.0 532.2" stroke="#ebe6dc" stroke-width="3" stroke-linecap="round"/>
<polygon points="1213.5,428.0 1341.6,493.0 1327.7,622.5 1201.0,557.7" fill="#f4efe7" />
<polygon points="1213.5,428.0 1341.6,493.0 1340.2,507.0 1212.0,442.0" fill="#33476b" />
<ellipse cx="1221.500" cy="438.800" rx="2" ry="2.400" fill="#c9c9c9"/><ellipse cx="1231" cy="443.600" rx="2" ry="2.400" fill="#c9c9c9"/>
<ellipse cx="1263" cy="531.500" rx="27.200" ry="34" fill="#f5a623" transform="rotate(-8 1263 531.500)"/>
<polygon points="1230.4,468.8 1309.8,511.4 1295.3,590.2 1221.0,552.2" fill="none" stroke="#4a63a1" stroke-width="1.300"/>
<rect x="1227.4" y="465.6" width="6" height="6.500" fill="#4a63a1"/>
<rect x="1306.8" y="508.2" width="6" height="6.500" fill="#4a63a1"/>
<rect x="1292.3" y="587.0" width="6" height="6.500" fill="#4a63a1"/>
<rect x="1218.0" y="549.0" width="6" height="6.500" fill="#4a63a1"/>
<rect x="1267.1" y="486.9" width="6" height="6.500" fill="#4a63a1"/>
<rect x="1299.5" y="547.6" width="6" height="6.500" fill="#4a63a1"/>
<rect x="1255.2" y="568.0" width="6" height="6.500" fill="#4a63a1"/>
<rect x="1222.7" y="507.3" width="6" height="6.500" fill="#4a63a1"/>
<path d="M1262.900 526.800 L1288 545.500 L1281 551 L1297.500 575.500 L1294 578 L1277.500 554 L1271.500 558.500 Z" fill="#2b3c5e"/>
<path d="M1378 512 L1376 582 L1366.500 587 Q1366 591 1372 591 L1388 588 L1392 530 L1402 590 L1400 598 Q1401 603 1407 602 L1416 596 L1409 512 Z" fill="#3d5275"/>
<path d="M1376 462 Q1386 455 1394 456 Q1408 458 1412.500 470 L1412 492 L1408 494 L1409 513 Q1392 518 1377 512 L1377 496 L1369.500 490 Q1368 478 1376 462 Z" fill="#fcc92a"/>
<path d="M1371 480 L1369 492 L1378 498 L1398 497 L1398 491 L1380 490 L1375 481 Z" fill="#f2a65a"/>
<rect x="1385" y="448" width="8" height="10" fill="#f2a65a"/>
<ellipse cx="1388" cy="443" rx="9" ry="10.500" fill="#f2a65a"/>
<path d="M1374.500 432.500 Q1385 423 1397 428 Q1406 435 1401 449 L1397 452 L1396 440 Q1388 433 1378 437 Z" fill="#2b3c5e"/>
<path d="M1303.500 607 L1304 668 L1299 673 Q1299 678 1305 677.500 L1312 673 L1314 625 L1317 665 L1314 671 Q1316 675 1321 674 L1327 670 L1326 607 Z" fill="#2b3c5e"/>
<path d="M1300 570 Q1312 562 1322 568 Q1328 580 1327 608 Q1314 612 1303 607 L1303 590 L1291 574 L1286 563 L1290 560 L1300 572 Z" fill="#fcc92a"/>
<ellipse cx="1306" cy="556" rx="6.500" ry="8" fill="#f2a65a"/>
<path d="M1298 546 Q1304 537 1314 542 Q1320 548 1319 554 Q1328 560 1325 567 Q1320 573 1313 568 Q1311 560 1308 552 Q1303 548 1298 549 Z" fill="#2b3c5e"/>
<path d="M949 566 L941 598 L925 620 Q924 628 931 631 L937 629 L957 601 L968 578 L976 600 L977 625 Q981 632 992 631 L994 626 L988 598 L984 570 Z" fill="#3a4d70"/>
<path d="M957 532 Q970 527 981 532 L995 554 L989 560 L980 549 L983 573 Q965 581 946.500 570 Q947 545 957 532 Z" fill="#5a75a4"/>
<ellipse cx="971" cy="521" rx="6.500" ry="8" fill="#f2a65a"/>
<path d="M960.500 517 Q962 509 972 509.500 Q979 511 978 516 L968 517 L966 524 Q961 522 960.500 517 Z" fill="#2b3c5e"/>
<polygon points="1003.0,546.0 1019.0,565.0 965.0,634.0 942.0,617.0" fill="#fcc92a" />
<polygon points="1012.0,556.0 1019.0,565.0 965.0,634.0 954.0,626.0" fill="#f0b322" />
<polygon points="1003.0,546.0 1019.0,565.0 1025.0,545.0 1012.0,534.0" fill="#f2d6a8" />
<path d="M1012 534 L1025 545 Q1029 533 1023 528 Q1017 527 1012 534 Z" fill="#2b3c5e"/>
<path d="M942 617 L965 634 Q957 645 945 638 Q936 630 942 617 Z" fill="#3d5275"/>
<ellipse cx="983" cy="578" rx="5" ry="3.500" fill="#f2a65a"/>
<polygon points="941,697 1011.200,651 1140,731.500 1073.600,779" fill="#2b3c5e" stroke="#2b3c5e" stroke-width="10" stroke-linejoin="round"/>
<polygon points="941,693 1011.200,647 1140,727.500 1073.600,775" fill="#3d5275" stroke="#3d5275" stroke-width="10" stroke-linejoin="round"/>
<polygon points="986,707.600 1035.200,677 1119,729 1073.600,758" fill="#5a75a4" stroke="#5a75a4" stroke-width="5" stroke-linejoin="round"/>
<polygon points="986,707.600 1035.200,677 1119,729 1073.600,758" fill="none" stroke="#2b3c5e" stroke-width="1" stroke-linejoin="round" transform="translate(0,0)"/>
<ellipse cx="970.4" cy="689.6" rx="8" ry="3.600" fill="#2b3c5e" transform="rotate(28 970.4 689.6)"/>
<ellipse cx="984.8" cy="680.0" rx="8" ry="3.600" fill="#2b3c5e" transform="rotate(28 984.8 680.0)"/>
<ellipse cx="998.0" cy="671.6" rx="8" ry="3.600" fill="#2b3c5e" transform="rotate(28 998.0 671.6)"/>
<ellipse cx="1012.4" cy="663.2" rx="8" ry="3.600" fill="#2b3c5e" transform="rotate(28 1012.4 663.2)"/>
<path d="M998 752 Q992 764 1000 771 Q1015 779 1036 771 Q1046 764 1044 752 Z" fill="#2b3c5e"/>
<path d="M1006 722 Q1018 716 1026 724 L1036 738 L1048 736 L1051 743 L1036 750 L1030 746 L1032 762 Q1012 770 997 760 Q996 736 1006 722 Z" fill="#5a75a4"/>
<ellipse cx="1028" cy="714" rx="7" ry="8.500" fill="#f2a65a"/>
<path d="M1018 697 Q1030 692 1037 700 L1036 706 Q1028 704 1025 712 L1022 724 Q1010 728 1005.500 718 Q1006 704 1018 697 Z" fill="#2b3c5e"/>
<ellipse cx="1051" cy="738.500" rx="4.500" ry="3.200" fill="#f2a65a"/>
<path d="M1044 732 L1057 744" stroke="#2b3c5e" stroke-width="2.600" stroke-linecap="round"/>
<path d="M1088 808.500 L1096 797 L1162 753 L1172 751 L1170 759 L1104 804 Z" fill="#3d5275"/>
<path d="M1088 808.500 L1104 804 L1170 759 L1172 751 Z" fill="#2b3c5e"/>
<path d="M1152 760 L1160 770 L1168 761 L1162 753 Z" fill="#fcc92a"/>
<path d="M1187.500 684 L1196 679 L1247 707 L1247 720 L1238 726 L1226 720 L1224 752 L1235 758 L1235 770 L1227 774 L1198.500 758 L1198.500 747 L1206 742 L1208 709 L1196 703 L1187.500 698 Z" fill="#f0b322"/>
<path d="M1196 679 L1247 707 L1238 713 L1187.500 684 Z" fill="#ffd84a"/>
<path d="M1187.500 684 L1238 713 L1238 726 L1219 715 L1217 757 L1227 763 L1227 774 L1198.500 758 L1198.500 747 L1206 751 L1208 709 L1187.500 698 Z" fill="#fcc92a"/>
<path d="M1207 810 L1234.500 823 L1232 823.500 L1212 819 Z" fill="#fcc92a"/>
<path d="M1205 807 L1215 812 L1211 820 L1201 815 Z" fill="#2b3c5e"/>
<ellipse cx="1187.500" cy="802" rx="28.500" ry="21" fill="#f0b322"/>
<ellipse cx="1187.500" cy="800" rx="28.500" ry="21" fill="#fcc92a"/>
<ellipse cx="1187.500" cy="800.500" rx="21" ry="14.500" fill="#c2c6cb"/>
<polygon points="1362,638.500 1387.500,622.300 1447.700,654.700 1420,675.500" fill="#ebe8e3" stroke="#ebe8e3" stroke-width="6" stroke-linejoin="round"/>
<ellipse cx="1386.5" cy="639.0" rx="8.500" ry="6" fill="#f5a623"/>
<ellipse cx="1406.0" cy="650.0" rx="8.500" ry="6" fill="#5a75a4"/>
<ellipse cx="1424.5" cy="659.5" rx="8.500" ry="6" fill="#33476b"/>
<polygon points="1304,710 1364.300,671.500 1429,706 1369,747.500" fill="#ebe8e3" stroke="#ebe8e3" stroke-width="7" stroke-linejoin="round"/>
<ellipse cx="1365.2" cy="686.2" rx="9" ry="6.300" fill="#f5a623"/>
<ellipse cx="1385.0" cy="697.8" rx="9" ry="6.300" fill="#f5a623"/>
<ellipse cx="1405.0" cy="709.0" rx="9" ry="6.300" fill="#33476b"/>
<ellipse cx="1347.0" cy="697.8" rx="9" ry="6.300" fill="#5a75a4"/>
<ellipse cx="1367.5" cy="709.4" rx="9" ry="6.300" fill="#5a75a4"/>
<ellipse cx="1386.5" cy="720.5" rx="9" ry="6.300" fill="#5a75a4"/>
<ellipse cx="1329.6" cy="709.4" rx="9" ry="6.300" fill="#fcc92a"/>
<ellipse cx="1349.5" cy="721.0" rx="9" ry="6.300" fill="#fcc92a"/>
<ellipse cx="1369.0" cy="732.5" rx="9" ry="6.300" fill="#33476b"/>
<polygon points="1286.4,726.8 1377.2,777.6 1369.4,791.6 1278.6,740.8" fill="#fcc92a" />
<polygon points="1282.0,734.7 1372.8,785.5 1369.4,791.6 1278.6,740.8" fill="#f0b322" />
<polygon points="1268.5,726.0 1286.4,726.8 1278.6,740.8" fill="#f2d6a8" />
<polygon points="1268.5,726.0 1275.2,726.3 1272.3,731.5" fill="#2b3c5e" />
<polygon points="1376.7,778.5 1384.5,782.9 1377.7,795.1 1369.9,790.7" fill="#3d5275" stroke="#3d5275" stroke-width="3" stroke-linejoin="round"/>
<polygon points="1270.6,749.2 1341.9,788.6 1334.6,801.7 1263.4,762.3" fill="#5a75a4" />
<polygon points="1266.5,756.6 1337.8,796.0 1334.6,801.7 1263.4,762.3" fill="#4a6394" />
<polygon points="1253.0,748.0 1270.6,749.2 1263.4,762.3" fill="#f2d6a8" />
<polygon points="1253.0,748.0 1259.6,748.4 1256.9,753.4" fill="#2b3c5e" />
<polygon points="1341.4,789.5 1349.3,793.8 1343.0,805.2 1335.1,800.8" fill="#2b3c5e" stroke="#2b3c5e" stroke-width="3" stroke-linejoin="round"/>
</svg><!--/ILLU-->
  <div id="title" style="left:63.5px;top:176.5px;font-size:51.3px;line-height:69.5px;-webkit-text-stroke:1.6px #233a6b;transform-origin:0 0;transform:scaleX(1.10)"><span style="letter-spacing:1.45px">Design</span><br><span style="letter-spacing:.48px">Fundamentals for</span><br><span style="letter-spacing:1.05px">Non-Designers</span></div>
  <svg class="abs" style="left:21.5px;top:23px" width="16" height="11" viewBox="0 0 16 11"><path d="M.5 1.700 H15.500 M.5 5.500 H15.500 M.5 9.300 H15.500" stroke="#444" stroke-width="1.500"/></svg>
  <svg class="abs" style="left:928px;top:740px" width="16" height="12" viewBox="0 0 16 12"><path d="M.8 3.700 H3 L7 .9 V11.100 L3 8.300 H.8 Z" fill="#454545"/><path d="M8.200 2.400 Q11.600 6 8.200 9.600 Z" fill="#454545"/><path d="M8.600 .8 A5.600 5.600 0 0 1 8.600 11.200" fill="none" stroke="#454545" stroke-width="1.100"/><path d="M10.200 .9 A6.200 6.200 0 0 1 10.200 11.100" fill="none" stroke="#454545" stroke-width=".9"/></svg>
  <svg class="abs" style="left:963px;top:739px" width="16" height="15" viewBox="0 0 16 15"><path d="M6.600 .5 H9.400 L9.900 2.500 L11.200 3.200 L13.100 2.500 L14.500 4.900 L13 6.300 V7.900 L14.500 9.300 L13.100 11.700 L11.200 11 L9.900 11.700 L9.400 13.700 H6.600 L6.100 11.700 L4.800 11 L2.900 11.700 L1.500 9.300 L3 7.900 V6.300 L1.500 4.900 L2.900 2.500 L4.800 3.200 L6.100 2.500 Z" fill="#454545" stroke="#454545" stroke-width=".8" stroke-linejoin="round"/><circle cx="8" cy="7.100" r="2.500" fill="#fff"/></svg>
  <svg class="abs" style="left:1005px;top:741px" width="9" height="13" viewBox="0 0 9 13"><path d="M7.500 1 L1.500 6.500 L7.500 12" fill="none" stroke="#b3b3b3" stroke-width="1.400"/></svg>
  <svg class="abs" style="left:1120px;top:741px" width="9" height="13" viewBox="0 0 9 13"><path d="M1.500 1 L7.500 6.500 L1.500 12" fill="none" stroke="#444" stroke-width="1.500"/></svg>
  <div class="abs" id="prev" style="left:1017.500px;top:741px;font-size:10.800px;line-height:12px;font-weight:bold;letter-spacing:.7px;color:#b3b3b3">PREV</div>
  <div class="abs" id="next" style="left:1083.500px;top:741px;font-size:10.800px;line-height:12px;font-weight:bold;letter-spacing:.7px;color:#444">NEXT</div>
 </div>
</div>
<div id="dock" class="abs" style="left:422px;top:917px;width:656px;height:51px;border-radius:14px;background:#57708e;box-shadow:inset 0 0 0 1px rgba(255,255,255,.16),0 0 0 .5px rgba(0,0,0,.3)"><div class="dki" style="left:6.8px;background:#1e9bf2;"><svg width="33" height="33" viewBox="0 0 33 33"><rect width="33" height="33" fill="#1e9bf2"/><path d="M17.500 0 H33 V33 H19 Q17.500 24 18.500 19 H14.500 Q14.500 9 17.500 0 Z" fill="#e9eef4"/><path d="M7 20.500 Q16.500 28 26.500 20.500" fill="none" stroke="#1d2f4a" stroke-width="1.500" stroke-linecap="round"/><path d="M9.500 9 V12.500 M23.500 9 V12.500" stroke="#1d2f4a" stroke-width="1.600" stroke-linecap="round"/></svg></div>
<div class="dki" style="left:48.8px;background:#fafafa;"><div style="position:absolute;left:0;top:0;width:33px;height:10px;background:#f0514a;color:#fff;font-size:6.5px;font-weight:bold;text-align:center;line-height:10.5px;letter-spacing:.2px">MAY</div><div style="position:absolute;left:0;top:10px;width:33px;text-align:center;font-size:20px;line-height:22px;color:#2a2a2a">26</div></div>
<div class="dki" style="left:90.8px;background:#fbfbfb;"><svg width="33" height="33" viewBox="0 0 33 33"><circle cx="16.500" cy="16.500" r="13" fill="#fbc116"/><path d="M16.500 16.500 L5.240 10 A13 13 0 0 1 27.760 10 Z" fill="#e33b2e"/><path d="M16.500 16.500 L5.240 10 A13 13 0 0 0 16.500 29.500 L22 20 Z" fill="#2da94f"/><path d="M16.500 10 H27.760 A13 13 0 0 0 5.240 10 Z" fill="#e33b2e"/><circle cx="16.500" cy="16.500" r="6.200" fill="#fff"/><circle cx="16.500" cy="16.500" r="4.900" fill="#2f7fe8"/></svg></div>
<div class="dki" style="left:133.3px;background:linear-gradient(135deg,#ffffff 40%,#e8d8fb 100%);"><svg width="33" height="33" viewBox="0 0 33 33"><path d="M15.500 6 V16 H5.500 Q6 7 15.500 6 Z" fill="#e26be8"/><path d="M17.500 6 H27 Q26 14 17.500 16 Z" fill="#2e7be8"/><path d="M5.500 18 H15.500 V27.500 Q6.500 27 5.500 18 Z" fill="#1e3a8a"/><path d="M17.500 18 Q26 19 28 27.500 H17.500 Z" fill="#27479a"/></svg></div>
<div class="dki" style="left:175.3px;background:#fff;"><svg width="33" height="33" viewBox="0 0 33 33"><g stroke-width="3.600" stroke-linecap="round" fill="none"><path d="M13.500 7.500 V14.500" stroke="#36c5f0"/><path d="M7.500 13.500 H8" stroke="#36c5f0"/><path d="M19.500 7.500 V8" stroke="#2eb67d"/><path d="M19 13.500 H25.500" stroke="#2eb67d"/><path d="M19.500 18.500 V25.500" stroke="#ecb22e"/><path d="M25 19.500 H25.500" stroke="#ecb22e"/><path d="M7.500 19.500 H14" stroke="#e01e5a"/><path d="M13.500 25 V25.500" stroke="#e01e5a"/></g></svg></div>
<div class="dki" style="left:217.5px;background:#fbfbfd;"><svg width="33" height="33" viewBox="0 0 33 33"><defs><linearGradient id="cg" x1="0" y1="0" x2="1" y2="1"><stop offset="0" stop-color="#8a5be0"/><stop offset="1" stop-color="#3b6fe0"/></linearGradient></defs><path d="M20.500 6.800 A10.500 10.500 0 1 1 12.500 6.800" fill="none" stroke="url(#cg)" stroke-width="4.200"/><path d="M12.500 6.800 A10.500 10.500 0 0 1 17 6" fill="none" stroke="#8a5be0" stroke-width="4.200"/></svg></div>
<div class="dki" style="left:259.5px;background:linear-gradient(180deg,#2d3a78 0%,#4a3a80 50%,#7a3a78 100%);width:35px;height:35px;top:5px;margin-left:-1px;border-radius:9px;"><svg width="35" height="35" viewBox="0 0 35 35"><circle cx="17.500" cy="17.800" r="7" fill="#fff"/><path d="M12.700 19.200 H22.300 Q21.800 23.300 17.500 23.300 Q13.200 23.300 12.700 19.200 Z" fill="#5a2a7a"/><path d="M7.800 19 Q7.800 8.200 17.500 8.200 Q27.200 8.200 27.200 19" fill="none" stroke="#fff" stroke-width="1.500"/><rect x="6" y="16.500" width="3.600" height="7" rx="1.600" fill="#fff"/><rect x="25.400" y="16.500" width="3.600" height="7" rx="1.600" fill="#fff"/></svg></div>
<div class="dki" style="left:302.0px;background:transparent;width:36px;height:36px;top:4.500px;margin-left:-1.500px;box-shadow:none;border-radius:0;"><svg width="36" height="36" viewBox="0 0 36 36"><ellipse cx="18" cy="7" rx="2.600" ry="7.500" fill="#d848d4" transform="rotate(0 18 18)"/><ellipse cx="18" cy="7" rx="2.600" ry="7.500" fill="#d848d4" transform="rotate(20 18 18)"/><ellipse cx="18" cy="7" rx="2.600" ry="7.500" fill="#d848d4" transform="rotate(40 18 18)"/><ellipse cx="18" cy="7" rx="2.600" ry="7.500" fill="#d848d4" transform="rotate(60 18 18)"/><ellipse cx="18" cy="7" rx="2.600" ry="7.500" fill="#d848d4" transform="rotate(80 18 18)"/><ellipse cx="18" cy="7" rx="2.600" ry="7.500" fill="#d848d4" transform="rotate(100 18 18)"/><ellipse cx="18" cy="7" rx="2.600" ry="7.500" fill="#d848d4" transform="rotate(120 18 18)"/><ellipse cx="18" cy="7" rx="2.600" ry="7.500" fill="#d848d4" transform="rotate(140 18 18)"/><ellipse cx="18" cy="7" rx="2.600" ry="7.500" fill="#d848d4" transform="rotate(160 18 18)"/><ellipse cx="18" cy="7" rx="2.600" ry="7.500" fill="#d848d4" transform="rotate(180 18 18)"/><ellipse cx="18" cy="7" rx="2.600" ry="7.500" fill="#d848d4" transform="rotate(200 18 18)"/><ellipse cx="18" cy="7" rx="2.600" ry="7.500" fill="#d848d4" transform="rotate(220 18 18)"/><ellipse cx="18" cy="7" rx="2.600" ry="7.500" fill="#d848d4" transform="rotate(240 18 18)"/><ellipse cx="18" cy="7" rx="2.600" ry="7.500" fill="#d848d4" transform="rotate(260 18 18)"/><ellipse cx="18" cy="7" rx="2.600" ry="7.500" fill="#d848d4" transform="rotate(280 18 18)"/><ellipse cx="18" cy="7" rx="2.600" ry="7.500" fill="#d848d4" transform="rotate(300 18 18)"/><ellipse cx="18" cy="7" rx="2.600" ry="7.500" fill="#d848d4" transform="rotate(320 18 18)"/><ellipse cx="18" cy="7" rx="2.600" ry="7.500" fill="#d848d4" transform="rotate(340 18 18)"/><ellipse cx="18" cy="9" rx="2" ry="6" fill="#f08af0" transform="rotate(10 18 18)"/><ellipse cx="18" cy="9" rx="2" ry="6" fill="#f08af0" transform="rotate(30 18 18)"/><ellipse cx="18" cy="9" rx="2" ry="6" fill="#f08af0" transform="rotate(50 18 18)"/><ellipse cx="18" cy="9" rx="2" ry="6" fill="#f08af0" transform="rotate(70 18 18)"/><ellipse cx="18" cy="9" rx="2" ry="6" fill="#f08af0" transform="rotate(90 18 18)"/><ellipse cx="18" cy="9" rx="2" ry="6" fill="#f08af0" transform="rotate(110 18 18)"/><ellipse cx="18" cy="9" rx="2" ry="6" fill="#f08af0" transform="rotate(130 18 18)"/><ellipse cx="18" cy="9" rx="2" ry="6" fill="#f08af0" transform="rotate(150 18 18)"/><ellipse cx="18" cy="9" rx="2" ry="6" fill="#f08af0" transform="rotate(170 18 18)"/><ellipse cx="18" cy="9" rx="2" ry="6" fill="#f08af0" transform="rotate(190 18 18)"/><ellipse cx="18" cy="9" rx="2" ry="6" fill="#f08af0" transform="rotate(210 18 18)"/><ellipse cx="18" cy="9" rx="2" ry="6" fill="#f08af0" transform="rotate(230 18 18)"/><ellipse cx="18" cy="9" rx="2" ry="6" fill="#f08af0" transform="rotate(250 18 18)"/><ellipse cx="18" cy="9" rx="2" ry="6" fill="#f08af0" transform="rotate(270 18 18)"/><ellipse cx="18" cy="9" rx="2" ry="6" fill="#f08af0" transform="rotate(290 18 18)"/><ellipse cx="18" cy="9" rx="2" ry="6" fill="#f08af0" transform="rotate(310 18 18)"/><ellipse cx="18" cy="9" rx="2" ry="6" fill="#f08af0" transform="rotate(330 18 18)"/><ellipse cx="18" cy="9" rx="2" ry="6" fill="#f08af0" transform="rotate(350 18 18)"/><circle cx="18" cy="18" r="5.200" fill="#7a3a9a"/><circle cx="18" cy="18" r="3.600" fill="#241c2c"/></svg></div>
<div class="dki" style="left:344.2px;background:transparent;width:35px;height:35px;top:5px;margin-left:-1px;box-shadow:none;border-radius:0;"><svg width="35" height="35" viewBox="0 0 35 35"><path d="M3 7 L25 3.500 L32 8.500 V30 L9 32.500 L3 26 Z" fill="#fff" stroke="#111" stroke-width="2.400" stroke-linejoin="round"/><path d="M3 7 L9 11 L32 8.500 M9 11 V32" fill="none" stroke="#111" stroke-width="2"/><text x="12" y="27.500" font-family="Liberation Serif,serif" font-weight="bold" font-size="17" fill="#111">N</text></svg></div>
<div class="dki" style="left:386.2px;background:#2a3145;"><svg width="33" height="33" viewBox="0 0 33 33"><rect x="1.500" y="1.500" width="30" height="30" rx="7" fill="#2a3145" stroke="#1a2030" stroke-width="1"/><path d="M9 3.500 H24" stroke="#f2c33a" stroke-width="1.800"/><path d="M3.500 9 V24" stroke="#e8453a" stroke-width="1.800"/><path d="M29.500 9 V24" stroke="#3fb85a" stroke-width="1.800"/><path d="M9 29.500 H24" stroke="#3a8fe8" stroke-width="1.800"/><circle cx="15.500" cy="15.500" r="3" fill="none" stroke="#e8e8f0" stroke-width="1.500"/><path d="M17 18 L21.500 24 M19 20.500 L17 22" stroke="#e8e8f0" stroke-width="1.500"/></svg></div>
<div class="dki" style="left:428.2px;background:linear-gradient(160deg,#19c2cc 0%,#1f9fe0 45%,#6a3fe0 100%);"><div style="position:absolute;left:0;top:9px;width:33px;text-align:center;font-family:'Liberation Serif',serif;font-style:italic;font-weight:bold;font-size:11.5px;color:#fff;letter-spacing:-.3px">Canva</div></div>
<div class="dki" style="left:470.2px;background:radial-gradient(circle at 60% 55%,#bfe6fb 0%,#4fb0ee 55%,#2a7fd0 100%);"><svg width="33" height="33" viewBox="0 0 33 33"><circle cx="13.500" cy="8" r="3.600" fill="#0b0b0b"/><path d="M9 14 Q10 11 14 11.500 L17 13 L22 9.500 L24 11 L18.500 17 L20 22 L25.500 27 L24 29 H6 Q4 27 6.500 25 L9 24 Z" fill="#0b0b0b"/><path d="M2 30 Q16 25 31 30 V33 H2 Z" fill="#0b0b0b"/></svg></div>
<div class="dki" style="left:512.2px;background:linear-gradient(180deg,#35b6f6 0%,#1b7fe8 100%);"><svg width="33" height="33" viewBox="0 0 33 33"><path d="M18 33 Q24 22 33 21 V33 Z" fill="#f4c430"/><path d="M16.500 5 L26.500 27 L16.500 22.500 L6.500 27 Z" fill="#fff"/><path d="M16.500 5 V22.500 L6.500 27 Z" fill="#e6eefa"/></svg></div>
<div class="dki" style="left:554.2px;background:#2b2d30;"><svg width="33" height="33" viewBox="0 0 33 33"><rect width="33" height="33" fill="#2b2d30"/><path d="M22 0 H33 V11 Q24 10 22 0Z" fill="#17181a"/><path d="M0 22 Q9 23 11 33 H0 Z" fill="#17181a"/><path d="M7 26 Q14 24 16 16 Q18 8 26 7" fill="none" stroke="#8a8d92" stroke-width="1.300"/><circle cx="26" cy="7" r="3.300" fill="#e6e6e6"/><circle cx="7" cy="26" r="3.300" fill="#e6e6e6"/></svg></div><div class="abs" style="left:601.5px;top:8px;width:1px;height:36px;background:#3f5572"></div><svg class="abs" style="left:616px;top:5px" width="34" height="38" viewBox="0 0 34 38"><defs><linearGradient id="tg" x1="0" y1="0" x2="1" y2="0"><stop offset="0" stop-color="#d2d6da"/><stop offset=".45" stop-color="#f3f4f6"/><stop offset="1" stop-color="#c6cbd0"/></linearGradient></defs><path d="M3 6 H31 L28 35 Q27.500 37 25 37 H9 Q6.500 37 6 35 Z" fill="url(#tg)" opacity=".96"/><ellipse cx="17" cy="6" rx="14" ry="3.600" fill="#e4e6e9" stroke="#bfc4c9" stroke-width=".8"/><path d="M8 5 L12 2 L16 4.500 L21 1.500 L26 5.500 L20 7 L13 7 Z" fill="#9aa3ad"/><path d="M12 3 L15 4.500 L13 6Z" fill="#4a8ad8"/><path d="M20 2.500 L23 4.500 L20 5.500Z" fill="#d8a84a"/></svg><div class="abs" style="left:21.8px;top:45px;width:3px;height:3px;border-radius:50%;background:#0c0f14"></div><div class="abs" style="left:63.8px;top:45px;width:3px;height:3px;border-radius:50%;background:#0c0f14"></div><div class="abs" style="left:105.8px;top:45px;width:3px;height:3px;border-radius:50%;background:#0c0f14"></div><div class="abs" style="left:148.3px;top:45px;width:3px;height:3px;border-radius:50%;background:#0c0f14"></div><div class="abs" style="left:317.0px;top:45px;width:3px;height:3px;border-radius:50%;background:#0c0f14"></div><div class="abs" style="left:359.2px;top:45px;width:3px;height:3px;border-radius:50%;background:#0c0f14"></div><div class="abs" style="left:401.2px;top:45px;width:3px;height:3px;border-radius:50%;background:#0c0f14"></div><div class="abs" style="left:443.2px;top:45px;width:3px;height:3px;border-radius:50%;background:#0c0f14"></div><div class="abs" style="left:485.2px;top:45px;width:3px;height:3px;border-radius:50%;background:#0c0f14"></div><div class="abs" style="left:527.2px;top:45px;width:3px;height:3px;border-radius:50%;background:#0c0f14"></div><div class="abs" style="left:569.2px;top:45px;width:3px;height:3px;border-radius:50%;background:#0c0f14"></div></div>
</body>
</html>
